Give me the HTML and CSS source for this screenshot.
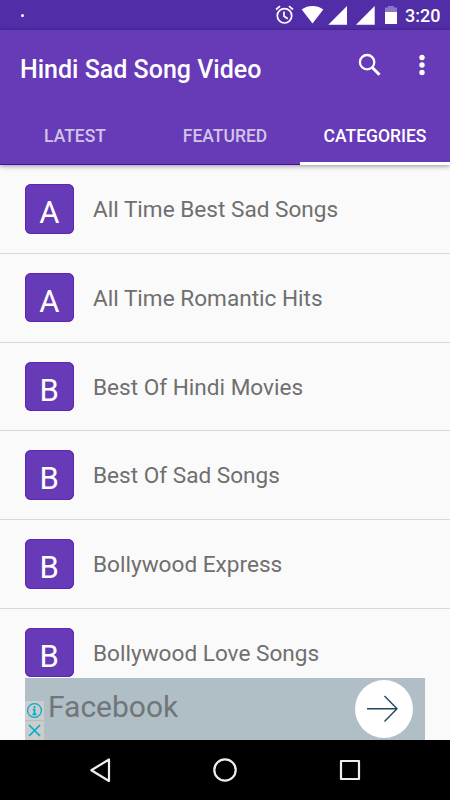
FILE: index.html
```html
<!DOCTYPE html>
<html lang="en">
<head>
<meta charset="utf-8">
<title>Hindi Sad Song Video</title>
<link rel="stylesheet" href="styles.css">
</head>
<body>
<div class="screen">
  <div class="status">
    <span class="dot"></span>
    <svg class="status-icons" width="130" height="30" viewBox="0 0 130 30" fill="#fff">
      <g fill="none" stroke="#fff" stroke-width="1.7">
        <circle cx="9.5" cy="15.8" r="7.2"/>
        <path d="M9 11.5v4.800l3.800 2.400M1 9.500l4-3.300M18 9.500l-4-3.300"/>
      </g>
      <path d="M26.700 9.400C33 4.800 42 4.800 48.300 9.400L37.500 23.500z"/>
      <path d="M53.300 24.700L72 6v18.700zM81 24.700L99.700 6v18.700z"/>
      <path opacity=".35" d="M110 12V7.500h3V6h6v1.500h3V12z"/>
      <path d="M110 12h12v12h-12z"/>
    </svg>
    <span class="clock">3:20</span>
  </div>
  <header class="header">
    <div class="toolbar">
      <h1 class="title">Hindi Sad Song Video</h1>
      <svg class="search" width="24" height="24" viewBox="0 0 24 24" fill="none" stroke="#fff">
        <circle cx="9.100" cy="9.200" r="7.200" stroke-width="2.300"/>
        <path d="M14 14.200l7.500 7.500" stroke-width="3"/>
      </svg>
      <svg class="more" width="6" height="22" viewBox="0 0 6 22" fill="#fff">
        <circle cx="3" cy="3.500" r="2.700"/><circle cx="3" cy="11" r="2.700"/><circle cx="3" cy="18.500" r="2.700"/>
      </svg>
    </div>
    <nav class="tabs">
      <span class="tab">LATEST</span>
      <span class="tab">FEATURED</span>
      <span class="tab active">CATEGORIES</span>
    </nav>
  </header>
  <main class="list">
    <div class="row"><span class="letter">A</span><span class="name">All Time Best Sad Songs</span></div>
    <div class="row"><span class="letter">A</span><span class="name">All Time Romantic Hits</span></div>
    <div class="row"><span class="letter">B</span><span class="name">Best Of Hindi Movies</span></div>
    <div class="row"><span class="letter">B</span><span class="name">Best Of Sad Songs</span></div>
    <div class="row"><span class="letter">B</span><span class="name">Bollywood Express</span></div>
    <div class="row"><span class="letter">B</span><span class="name">Bollywood Love Songs</span></div>
  </main>
  <aside class="ad">
    <div class="ad-controls">
      <svg width="19" height="19" viewBox="0 0 19 19" fill="none" stroke="#00aecd">
        <circle cx="9.500" cy="9.500" r="6.900" stroke-width="1.300"/>
        <path d="M9.500 5v2M7.800 8.700h1.700v4.500M7.500 13.400h4" stroke-width="1.700"/>
      </svg>
      <svg width="19" height="19" viewBox="0 0 19 19" fill="none" stroke="#00aecd" stroke-width="1.700">
        <path d="M4 4l11 11M15 4L4 15"/>
      </svg>
    </div>
    <span class="ad-text">Facebook</span>
    <span class="ad-go">
      <svg width="58" height="58" viewBox="0 0 58 58" fill="none" stroke="#23485a" stroke-width="1.400">
        <path d="M12 28.800h29.500M29.500 16l12.500 12.800L29.500 41.500"/>
      </svg>
    </span>
  </aside>
  <footer class="navbar">
    <svg width="450" height="60" viewBox="0 0 450 60" fill="none" stroke="#eee" stroke-width="2.200" stroke-linejoin="round">
      <path d="M109 19.500v21.500L91.300 30.200z"/>
      <circle cx="225" cy="30" r="10.700"/>
      <path d="M341 21h18v18h-18z"/>
    </svg>
  </footer>
</div>
</body>
</html>
```
FILE: styles.css
```css
* { box-sizing: border-box; }
body { margin: 0; font-family: Roboto, sans-serif; }
.screen { position: relative; width: 450px; height: 800px; overflow: hidden; background: #fafafa; display: flex; flex-direction: column; }
.status { height: 30px; flex: none; display: flex; align-items: center; background: #512da8; color: #fff; padding-right: 10px; }
.dot { width: 3px; height: 3px; border-radius: 50%; background: #fff; margin-left: 21px; margin-right: auto; }
.status-icons { flex: none; }
.clock { width: 35px; font-size: 18px; line-height: 30px; font-weight: 500; padding-top: 2px; white-space: nowrap; }
.header { position: relative; height: 135px; flex: none; background: #673ab7; box-shadow: 0 1px 5px rgba(0,0,0,.42); color: #fff; }
.toolbar { height: 75px; display: flex; align-items: flex-start; padding: 0 25px 0 20px; }
.title { margin: 25px auto 0 0; font-size: 25px; line-height: 30px; font-weight: 500; white-space: nowrap; }
.search { margin: 23px 37px 0 0; }
.more { margin-top: 24px; }
.tabs { height: 60px; display: grid; grid-template-columns: repeat(3, 1fr); border-bottom: 1px solid #5404ae; }
.tab { text-align: center; font-size: 17.500px; line-height: 63px; font-weight: 500; color: #d1c4e9; height: 60px; }
.tab.active { color: #fff; border-bottom: 3px solid #fff; }
.list { flex: 1; min-height: 0; overflow: hidden; }
.row { height: 88.750px; display: flex; align-items: flex-start; padding: 19px 0 0 24.500px; border-bottom: 1px solid #d9d9d9; }
.row:last-child { border-bottom: 0; }
.letter { width: 49.500px; height: 49.500px; border-radius: 6px; background: #673ab7; box-shadow: inset 0 0 0 1px #5f25b3; color: #fff; font-size: 31px; line-height: 57px; text-align: center; }
.name { margin-left: 19px; font-size: 22.600px; line-height: 52px; color: #6f6f6f; white-space: nowrap; }
.ad { position: absolute; left: 25px; top: 677.500px; width: 400px; height: 62.500px; background: #b0bec5; display: flex; }
.ad-controls { margin-top: 23.500px; width: 19px; display: grid; grid-template-rows: 19px 19px; gap: 1px; }
.ad-controls svg { display: block; background: #ccc; }
.ad-text { margin-left: 4px; font-size: 30px; line-height: 58px; color: #707679; }
.ad-go { margin: 2.500px 12px 0 auto; width: 58px; height: 58px; border-radius: 50%; background: #fff; }
.navbar { height: 60px; flex: none; background: #000; }
.navbar svg { display: block; }
```
